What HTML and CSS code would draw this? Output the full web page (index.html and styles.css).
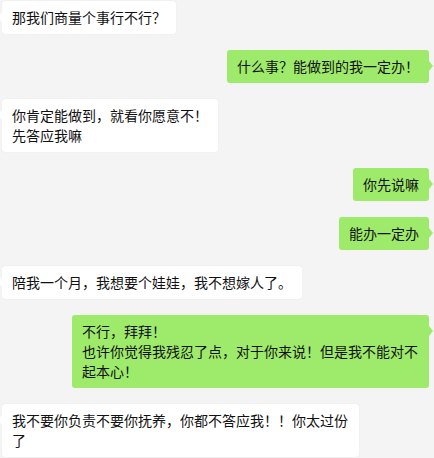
FILE: index.html
```html
<!DOCTYPE html>
<html lang="zh-CN">
<head>
    <meta charset="UTF-8">
    <meta name="viewport" content="width=device-width, initial-scale=1.0">
    <title>聊天记录</title>
    <link rel="stylesheet" href="styles.css">
</head>
<body>
    <!-- 聊天窗口 -->
    <div class="chat">
        <div class="row left"><div class="bubble">那我们商量个事行不行<span class="p">？</span></div></div>
        <div class="row right"><div class="bubble">什么事<span class="p">？</span>能做到的我一定办<span class="p">！</span></div></div>
        <div class="row left"><div class="bubble">你肯定能做到，就看你愿意不<span class="p">！</span><br>先答应我嘛</div></div>
        <div class="row right"><div class="bubble">你先说嘛</div></div>
        <div class="row right"><div class="bubble">能办一定办</div></div>
        <div class="row left"><div class="bubble">陪我一个月，我想要个娃娃，我不想嫁人了。</div></div>
        <div class="row right"><div class="bubble">不行，拜拜<span class="p">！</span><br>也许你觉得我残忍了点，对于你来说<span class="p">！</span>但是我不能对不起本心<span class="p">！</span></div></div>
        <div class="row left"><div class="bubble">我不要你负责不要你抚养，你都不答应我<span class="p">！！</span>你太过份了</div></div>
    </div>
</body>
</html>
```

FILE: styles.css
```css
/* 整个页面：浅灰背景 */
html, body {
    margin: 0;
    padding: 0;
    width: 100%;
    height: 100%;
    overflow: hidden;
    background-color: #f4f4f4;
}

.chat {
    display: flex;
    flex-direction: column;
    gap: 16px;
    padding: 1px 5px 0 2px;
    font-family: "Microsoft YaHei", "Noto Sans CJK SC", sans-serif;
    font-size: 14px;
    line-height: 20px;
    color: #111;
}

.row {
    display: flex;
}

.row.left {
    justify-content: flex-start;
}

.row.right {
    justify-content: flex-end;
}

/* 气泡 */
.bubble {
    position: relative;
    box-sizing: border-box;
    max-width: 357px;
    padding: 6px 10px 7px 10px;
    border-radius: 3px;
}

/* 全角感叹号、问号居中显示 */
.p {
    font-family: "Noto Sans CJK TC", sans-serif;
    line-height: 20px;
}

.left .bubble {
    background-color: #ffffff;
    box-shadow: 0 0 1px rgb(0 0 0 / 12%);
}

.right .bubble {
    background-color: #9eea6a;
}

/* 小三角 */
.bubble::before {
    content: "";
    position: absolute;
    top: 11px;
    width: 0;
    height: 0;
    border-top: 5px solid transparent;
    border-bottom: 5px solid transparent;
}

.left .bubble::before {
    left: -4px;
    border-right: 4px solid #ffffff;
}

.right .bubble::before {
    right: -4px;
    border-left: 4px solid #9eea6a;
}
```
